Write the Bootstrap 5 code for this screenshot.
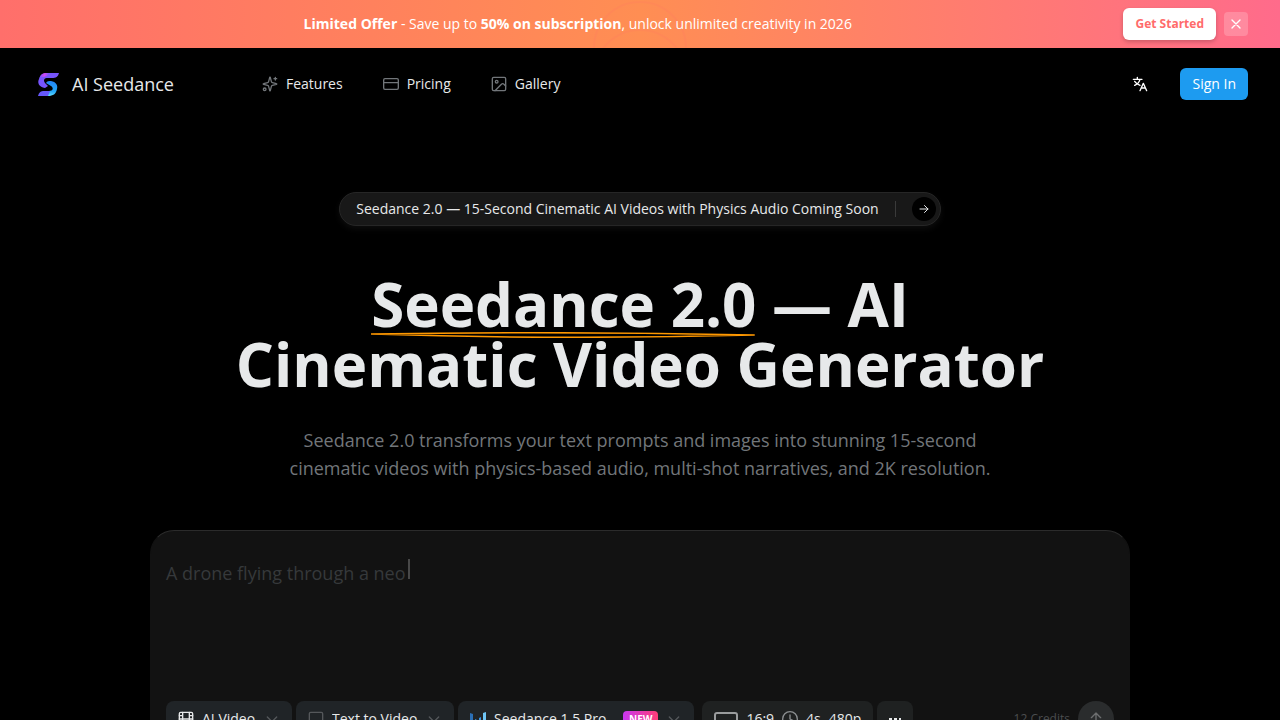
<!DOCTYPE html>
<html lang="en" data-bs-theme="dark">
<head>
<meta charset="utf-8">
<meta name="viewport" content="width=device-width, initial-scale=1">
<title>AI Seedance</title>
<link href="https://cdn.jsdelivr.net/npm/bootstrap@5.3.0/dist/css/bootstrap.min.css" rel="stylesheet">
<style>
  body { font-family: "Open Sans", sans-serif; font-size: 14px; line-height: 20px; background: #000; color: #e7e9ea; }
  svg { flex: none; fill: none; stroke: currentColor; stroke-width: 2; stroke-linecap: round; stroke-linejoin: round; }
  svg.solid-art { stroke: none; }
  .promo { min-height: 48px; background: linear-gradient(90deg, #ff6f6b, #ff8e53 50%, #ff6b8b); color: #fff; }
  .promo-ring { left: 50%; top: 0; transform: translateX(-50%); opacity: .12; stroke: #ff6b6b; }
  .promo strong { font-weight: 700; }
  .btn-offer { --bs-btn-bg: #fff; --bs-btn-color: #ff6b6b; --bs-btn-hover-bg: #fff; --bs-btn-hover-color: #ff6b6b; height: 32px; padding: 0 12px; border: 0; border-radius: 6px; font-size: 12px; font-weight: 700; box-shadow: 0 2px 4px rgba(0,0,0,.2); }
  .btn-dismiss { width: 24px; height: 24px; border: 0; border-radius: 4px; background: rgba(255,255,255,.2); color: #fff; }
  .site-nav { height: 72px; }
  .brand-name { font-size: 18px; line-height: 28px; }
  .site-nav .nav-link { color: #e7e9ea; padding: 8px 12px; }
  .site-nav .nav-link svg { color: #72767a; }
  .nav-start { margin-left: 76px; }
  .btn-sign { height: 32px; padding: 0 12px; border: 0; border-radius: 6px; font-size: 14px; line-height: 20px; background: #1d9bf0; color: #fff; }
  .announce { height: 34px; padding: 0 4px 0 16px; background: #181818; border: 1px solid #262626; box-shadow: 0 3px 6px rgba(255,255,255,.05); color: #e7e9ea; }
  .announce-rule { width: 1px; height: 16px; background: #3a3a3a; margin: 0 16px; }
  .announce-go { width: 24px; height: 24px; background: #000; }
  .hero-head { margin-top: 72px; }
  h1 { font-size: 60px; line-height: 60px; font-weight: 700; max-width: 832px; margin: 48px auto 0; color: #e7e9ea; }
  .underlined { position: relative; display: inline-block; }
  .underlined svg { position: absolute; left: 0; bottom: -4px; width: 100%; height: 6px; }
  .hero-copy { font-size: 18px; line-height: 28px; max-width: 720px; color: #72767a; margin: 32px auto 0; }
  .composer { max-width: 980px; margin: 48px auto 0; padding: 16px 15px; background: #121212; border: 1px solid #2b2b2b; border-left-color: #121212; border-right-color: #121212; border-radius: 24px; }
  .prompt-area { height: 138px; }
  .prompt-area textarea { resize: none; background: transparent; border: 0; color: #e7e9ea; font-size: 18px; }
  .prompt-hint { position: absolute; left: 0; top: 12px; font-size: 18px; line-height: 28px; color: #36393b; pointer-events: none; }
  .caret { width: 2px; height: 20px; background: #484848; margin-left: 2px; }
  .tool { height: 36px; border: 0; border-radius: 8px; background: #202427; color: #e7e9ea; padding: 0 12px; font-size: 14px; }
  .tool select { appearance: none; border: 0; background: transparent; color: inherit; font: inherit; padding: 0; outline: 0; }
  .tool option { background: #202427; }
  .tool .chev { color: #55585b; }
  .tool .dim { color: #8b8e90; }
  .tool-plain { background: #1f2121; }
  .new-tag { font-size: 10px; line-height: 16px; padding: 0 6px; border-radius: 4px; color: #fff; font-weight: 700; background: linear-gradient(90deg, #c837f0, #ff3d77); }
  .frame-shape { width: 24px; height: 14px; border: 2px solid #9a9c9d; border-radius: 3px; }
  .credits { font-size: 12px; color: #4b4d4f; }
  .btn-send { width: 36px; height: 36px; border: 0; background: #2a2c2d; color: #6d6f70; }
</style>
</head>
<body>
<div class="vh-100 overflow-hidden">
  <section class="promo position-relative d-flex align-items-center ps-4 pe-4" aria-label="Offer">
    <svg class="promo-ring position-absolute" width="110" height="48" viewBox="0 0 110 48" aria-hidden="true"><circle cx="55" cy="48" r="46"/><circle cx="55" cy="76" r="46"/></svg>
    <div class="flex-grow-1 text-center ps-4 pe-3"><strong>Limited Offer</strong> - Save up to <strong>50% on subscription</strong>, unlock unlimited creativity in 2026</div>
    <div class="d-flex align-items-center gap-2 me-2">
      <button class="btn btn-offer" type="button">Get Started</button>
      <button class="btn btn-dismiss p-0 d-flex align-items-center justify-content-center" type="button" aria-label="Dismiss"><svg width="16" height="16" viewBox="0 0 24 24"><path d="M18 6 6 18M6 6l12 12"/></svg></button>
    </div>
  </section>

  <header class="site-nav d-flex align-items-center px-4">
    <a href="#" class="d-flex align-items-center gap-2 text-decoration-none text-reset ms-2">
      <svg class="solid-art" width="32" height="32" viewBox="0 0 32 32" aria-hidden="true">
        <defs>
          <linearGradient id="sa" x1="0" y1="0" x2="1" y2="0"><stop offset="0" stop-color="#7c4ff8"/><stop offset=".5" stop-color="#d347f4"/><stop offset="1" stop-color="#7357f8"/></linearGradient>
          <linearGradient id="sb" x1="0" y1="0" x2="0" y2="1"><stop offset="0" stop-color="#2384f7"/><stop offset=".7" stop-color="#24a8f7"/><stop offset="1" stop-color="#62dcff"/></linearGradient>
        </defs>
        <path fill="#7654fc" d="M27 5c-1 4-3 5-7 5h-4c-4 0-5 2-3 5l3 3-3 2c-6-1-8-5-6-9 1-4 4-6 8-6Z"/>
        <path fill="url(#sa)" d="M8 9c1-3 3-4 6-4h3l-2 3-4 1Z"/>
        <path fill="url(#sb)" d="M14 15c1-2 3-2 5-2 5 1 7 4 6 8-1 5-4 7-9 7h-3l4-5c4 0 5-3 2-5Z"/>
        <path fill="#6658fa" d="M6 28c1-4 3-5 6-5h6l-2 5Z"/>
      </svg>
      <span class="brand-name">AI Seedance</span>
    </a>
    <nav class="nav nav-start gap-3" aria-label="Main">
      <a class="nav-link d-flex align-items-center gap-2" href="#"><svg width="16" height="16" viewBox="0 0 24 24"><path d="M9.9 15.5A2 2 0 0 0 8.5 14.1l-6.1-1.6a.5.5 0 0 1 0-1L8.5 9.9a2 2 0 0 0 1.4-1.4l1.6-6.1a.5.5 0 0 1 1 0l1.6 6.1a2 2 0 0 0 1.4 1.4l6.1 1.6a.5.5 0 0 1 0 1l-6.1 1.6a2 2 0 0 0-1.4 1.4l-1.6 6.1a.5.5 0 0 1-1 0ZM20 2v4M22 4h-4"/><circle cx="4" cy="20" r="2"/></svg>Features</a>
      <a class="nav-link d-flex align-items-center gap-2" href="#"><svg width="16" height="16" viewBox="0 0 24 24"><rect x="1" y="4" width="22" height="16" rx="2"/><path d="M1 10h22"/></svg>Pricing</a>
      <a class="nav-link d-flex align-items-center gap-2" href="#"><svg width="16" height="16" viewBox="0 0 24 24"><rect x="2" y="2" width="20" height="20" rx="2"/><circle cx="8.500" cy="8.500" r="2"/><path d="m22 15-3-3a2 2 0 0 0-3 0L6 22"/></svg>Gallery</a>
    </nav>
    <div class="d-flex align-items-center gap-4 ms-auto me-2">
      <button class="btn border-0 p-2 d-flex text-white" type="button" aria-label="Language"><svg width="16" height="16" viewBox="0 0 24 24"><path d="M2 5h13M8 2v3M4 14c4-2 7-5 8-9M4 8c2 3 5 5 8 6M12 22l5-11 5 11M14 18h6"/></svg></button>
      <button class="btn btn-sign" type="button">Sign In</button>
    </div>
  </header>

  <main class="px-3">
    <div class="hero-head d-flex justify-content-center">
      <a href="#" class="announce rounded-pill d-inline-flex align-items-center text-decoration-none">Seedance 2.0 — 15-Second Cinematic AI Videos with Physics Audio Coming Soon<span class="announce-rule"></span><span class="announce-go rounded-circle d-flex align-items-center justify-content-center"><svg width="12" height="12" viewBox="0 0 24 24" aria-hidden="true"><path d="M4 12h16M13 5l7 7-7 7"/></svg></span></a>
    </div>
    <h1 class="text-center"><span class="underlined">Seedance 2.0<svg viewBox="0 0 386 6" preserveAspectRatio="none" aria-hidden="true"><path stroke="#ff9800" stroke-width="1.500" d="M0 2Q190-1 384 3Q190 8 0 2"/></svg></span> — AI Cinematic Video Generator</h1>
    <p class="hero-copy text-center">Seedance 2.0 transforms your text prompts and images into stunning 15-second cinematic videos with physics-based audio, multi-shot narratives, and 2K resolution.</p>

    <form class="composer">
      <div class="prompt-area position-relative">
        <textarea id="prompt" class="w-100 h-100 p-0"></textarea>
        <label for="prompt" class="prompt-hint d-flex">A drone flying through a neo<span class="caret"></span></label>
      </div>
      <div class="d-flex align-items-center gap-1 mt-3">
        <div class="tool d-flex align-items-center gap-2">
          <svg width="16" height="16" viewBox="0 0 24 24" aria-hidden="true"><rect x="2" y="2" width="20" height="20" rx="2"/><path d="M7 2v20M17 2v20M2 12h20M2 7h5M2 17h5M17 7h5M17 17h5"/></svg>
          <select aria-label="Mode"><option>AI Video</option></select>
          <svg class="chev" width="16" height="16" viewBox="0 0 24 24" aria-hidden="true"><path d="m5 9 7 7 7-7"/></svg>
        </div>
        <div class="tool d-flex align-items-center gap-2">
          <svg class="chev" width="16" height="16" viewBox="0 0 24 24" aria-hidden="true"><rect x="2" y="2" width="20" height="20" rx="2"/></svg>
          <select aria-label="Input type"><option>Text to Video</option></select>
          <svg class="chev" width="16" height="16" viewBox="0 0 24 24" aria-hidden="true"><path d="m5 9 7 7 7-7"/></svg>
        </div>
        <div class="tool d-flex align-items-center gap-2">
          <svg class="solid-art" width="16" height="16" viewBox="0 0 16 16" aria-hidden="true"><path fill="#2b6fb5" d="M0 2l3 1v12l-3 1Z"/><path fill="#3a93e0" d="M5 8l2 1v6H5ZM9 7l2-1v9H9Z"/><path fill="#6fc5f5" d="M13 2l3-1v15l-3-1Z"/></svg>
          <select aria-label="Model"><option>Seedance 1.5 Pro</option></select>
          <span class="new-tag ms-2">NEW</span>
          <svg class="chev" width="16" height="16" viewBox="0 0 24 24" aria-hidden="true"><path d="m5 9 7 7 7-7"/></svg>
        </div>
        <button class="tool tool-plain d-flex align-items-center gap-2 ms-1" type="button"><span class="frame-shape"></span>16:9<svg class="dim" width="16" height="16" viewBox="0 0 24 24" aria-hidden="true"><circle cx="12" cy="12" r="11"/><path d="M12 6v6l4 2"/></svg><span>4s</span><span>480p</span></button>
        <button class="tool tool-plain d-flex align-items-center" type="button" aria-label="More"><svg class="solid-art" width="12" height="12" viewBox="0 0 12 12"><path fill="currentColor" d="M0 5h3v3H0ZM5 5h3v3H5ZM10 5h3v3h-3Z"/></svg></button>
        <div class="ms-auto d-flex align-items-center gap-2"><span class="credits">12 Credits</span>
          <button class="btn btn-send rounded-circle p-0 d-flex align-items-center justify-content-center" type="submit" aria-label="Generate"><svg width="16" height="16" viewBox="0 0 24 24"><path d="M12 22V3M5 10l7-7 7 7"/></svg></button>
        </div>
      </div>
    </form>
  </main>
</div>
<script src="https://cdn.jsdelivr.net/npm/bootstrap@5.3.0/dist/js/bootstrap.bundle.min.js"></script>
</body>
</html>
